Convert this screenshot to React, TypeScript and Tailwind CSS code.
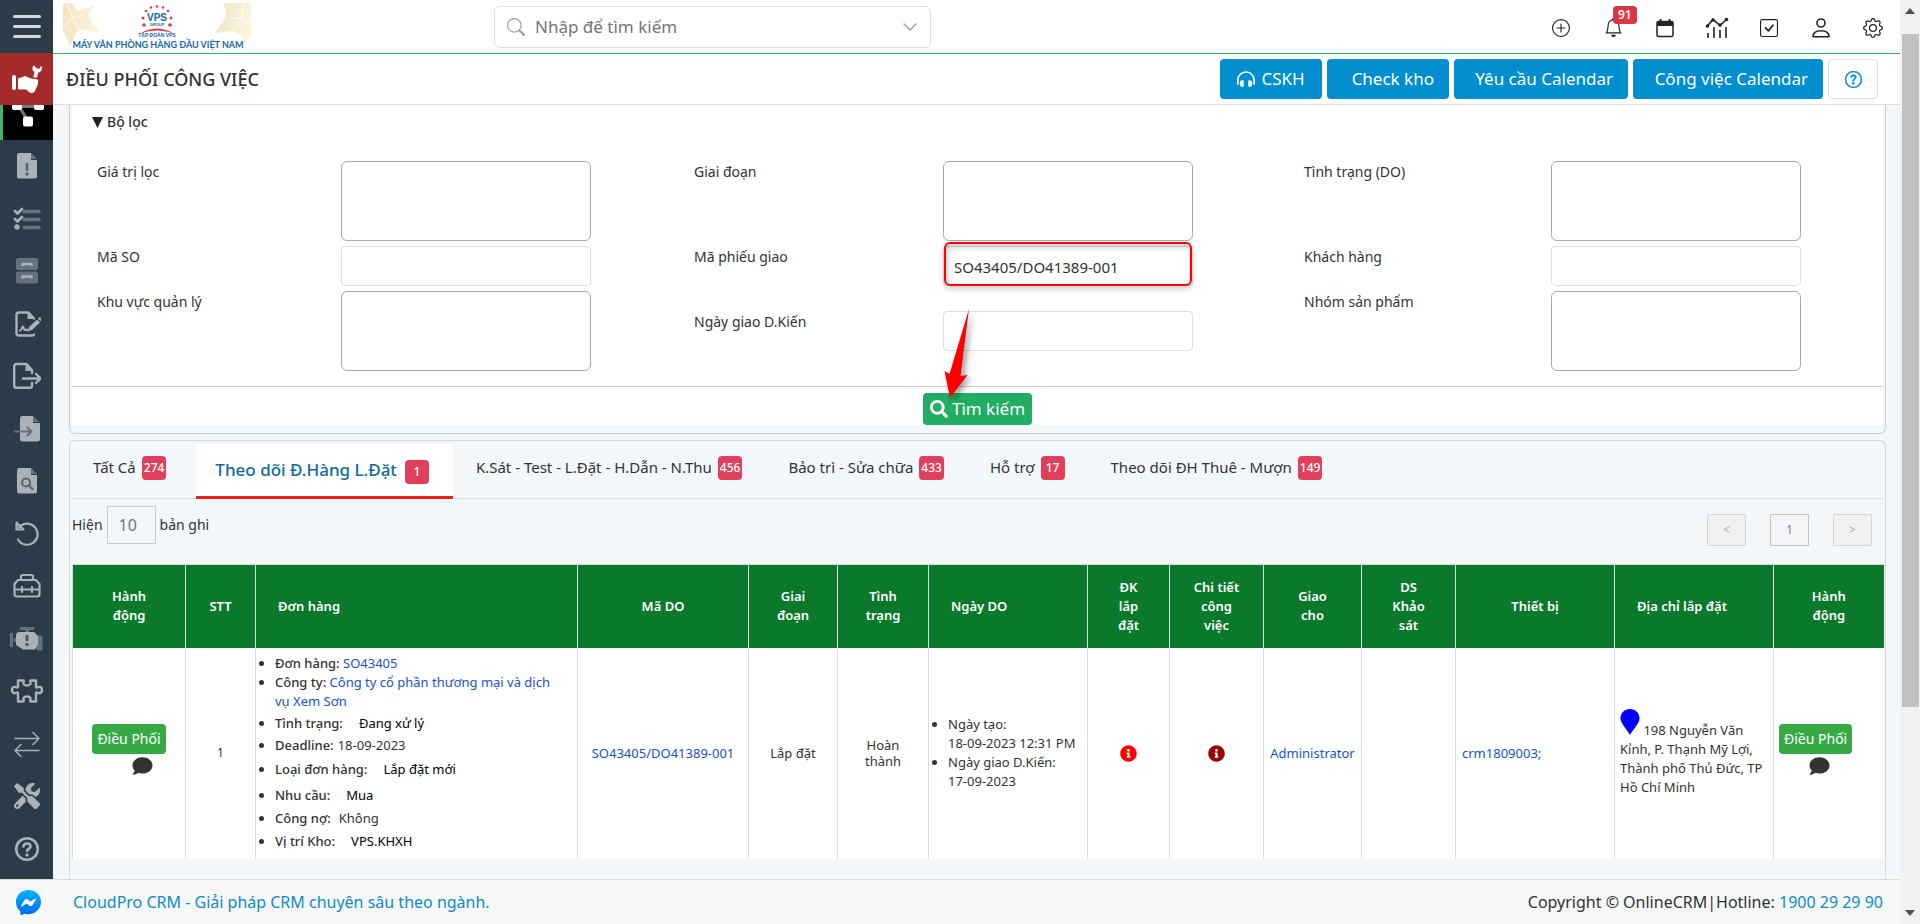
import React from 'react'
import { BsPlusCircle, BsBell, BsCheckSquare, BsGear, BsSearch, BsChevronDown, BsQuestionCircle } from 'react-icons/bs'
import { FaComment, FaInfoCircle, FaSearch, FaHeadphonesAlt, FaTools } from 'react-icons/fa'

const MAIN = '#abb1b8'
const DIM = '#65717d'

type IconProps = { children: React.ReactNode }

const SideSvg = ({ children }: IconProps) => (
  <svg viewBox="0 0 28 28" className="h-7 w-7" fill="none" strokeLinecap="round" strokeLinejoin="round">
    {children}
  </svg>
)

const sideItems: { name: string; icon: React.ReactNode }[] = [
  {
    name: 'Cảnh báo',
    icon: (
      <SideSvg>
        <path d="M6 1h12v7h6v16a2.500 2.500 0 0 1-2.500 2.500h-15A2.500 2.500 0 0 1 4 24V3.500A2.500 2.500 0 0 1 6 1z" fill={MAIN} />
        <path d="M18 1l6 6h-6z" fill={DIM} />
        <path d="M14 12v6" stroke="#5a6673" strokeWidth="2.600" />
        <circle cx="14" cy="22" r="1.700" fill="#5a6673" />
      </SideSvg>
    ),
  },
  {
    name: 'Danh sách',
    icon: (
      <SideSvg>
        <path d="M2 6l2.500 2.500L9 4M2 14l2.500 2.500L9 12" stroke={MAIN} strokeWidth="2.600" />
        <circle cx="4" cy="22" r="2.700" fill={MAIN} />
        <path d="M11 6.500h15M11 14.500h15M11 22.500h15" stroke={DIM} strokeWidth="3.400" />
      </SideSvg>
    ),
  },
  {
    name: 'Lưu trữ',
    icon: (
      <SideSvg>
        <rect x="3" y="1" width="22" height="12" rx="2" fill={DIM} />
        <rect x="3" y="14.500" width="22" height="12" rx="2" fill={DIM} />
        <path d="M9.500 9V7h9v2M9.500 21.500v-2h9v2" stroke={MAIN} strokeWidth="2.400" strokeLinecap="butt" />
      </SideSvg>
    ),
  },
  {
    name: 'Hợp đồng',
    icon: (
      <SideSvg>
        <path d="M21 24.500c-.3.700-1 1-1.500 1H6A2.500 2.500 0 0 1 3.500 23V5A2.500 2.500 0 0 1 6 2.500h9.500l5.500 6" stroke={MAIN} strokeWidth="2.400" />
        <path d="M14.500 2v7H22z" fill={MAIN} />
        <path d="M7 20.500c2-.5 2-4 3-4s.5 4 2 3.500 1.500-1 3 .5" stroke={MAIN} strokeWidth="2" />
        <path d="M15 21l1-4 8-7.500 3 3-8 7.500z" fill={MAIN} />
        <path d="M25 8.500l1-1c1-.7 3.500 1.500 2 3l-.8.800z" fill={MAIN} />
      </SideSvg>
    ),
  },
  {
    name: 'Xuất dữ liệu',
    icon: (
      <SideSvg>
        <path d="M19 11V8l-5.500-6H3.500C2 2 1.200 3 1.200 4v19.500c0 1.500 1 2.300 2.300 2.300h13c1.500 0 2.500-1 2.500-2.300V21" stroke={MAIN} strokeWidth="2.400" />
        <path d="M12.500 2v7H20z" fill={MAIN} />
        <path d="M10 16.500h17M23 12l4.500 4.500L23 21" stroke={MAIN} strokeWidth="2.400" />
      </SideSvg>
    ),
  },
  {
    name: 'Nhập dữ liệu',
    icon: (
      <SideSvg>
        <path d="M9 1h11v7h7v16a2.500 2.500 0 0 1-2.500 2.500H9.500A2.500 2.500 0 0 1 7 24V3.500A2.500 2.500 0 0 1 9 1z" fill={MAIN} />
        <path d="M20 1l7 6h-7z" fill={DIM} />
        <path d="M2 16.500h16M14.500 12.500l4 4-4 4" stroke={DIM} strokeWidth="2.200" />
      </SideSvg>
    ),
  },
  {
    name: 'Tra cứu',
    icon: (
      <SideSvg>
        <path d="M6 1h12v7h6v16a2.500 2.500 0 0 1-2.500 2.500h-15A2.500 2.500 0 0 1 4 24V3.500A2.500 2.500 0 0 1 6 1z" fill={MAIN} />
        <path d="M18 1l6 6h-6z" fill={DIM} />
        <circle cx="13" cy="15.500" r="4" stroke="#5a6673" strokeWidth="2.200" />
        <path d="M16 18.500l3.500 3.500" stroke="#5a6673" strokeWidth="2.400" />
      </SideSvg>
    ),
  },
  {
    name: 'Hoàn tác',
    icon: (
      <SideSvg>
        <path d="M6 7.500A10.500 10.500 0 1 1 5 19.500" stroke={MAIN} strokeWidth="2.200" />
        <path d="M3.500 2.500v7h7z" stroke={MAIN} strokeWidth="2.200" />
      </SideSvg>
    ),
  },
  {
    name: 'Công cụ',
    icon: (
      <SideSvg>
        <path d="M8 8V4.500C8 3.500 8.500 3 9.500 3h9c1 0 1.500.5 1.500 1.500V8" stroke={MAIN} strokeWidth="2.200" />
        <path d="M5 8h18l3.500 4v10c0 1.500-.8 2.500-2.500 2.500H4c-1.700 0-2.500-1-2.500-2.500V12zM2 17.500h24M9 15v5M19 15v5" stroke={MAIN} strokeWidth="2.200" />
      </SideSvg>
    ),
  },
  {
    name: 'Sự cố',
    icon: (
      <svg viewBox="0 0 34 28" className="h-7 w-[34px]" fill="none">
        <path d="M11 3.500h12" stroke={DIM} strokeWidth="3" strokeLinecap="round" />
        <path d="M17 4v4M4 15h4" stroke={DIM} strokeWidth="4" />
        <path d="M1.500 8v14M28 12h3v12h-3z" stroke={DIM} strokeWidth="3" strokeLinejoin="round" />
        <path d="M9 7h15l4 4v9l-3 4.500H13L6 20v-9c0-3 1-4 3-4z" fill={MAIN} />
        <path d="M17 10v6" stroke="#44515f" strokeWidth="2.800" />
        <circle cx="17" cy="19.500" r="1.700" fill="#44515f" />
      </svg>
    ),
  },
  {
    name: 'Tiện ích',
    icon: (
      <svg viewBox="0 0 34 28" className="h-7 w-[34px]" fill="none" stroke={MAIN} strokeWidth="2.400" strokeLinejoin="round">
        <path d="M8 3.500h5.500c1 1.200-.6 2 .1 3.500 1 2 5.800 2 6.800 0 .7-1.500-.9-2.300.1-3.500H26v6.800c1.500.8 2.400-.8 4-.4 2.700.8 2.700 5.400 0 6.200-1.600.4-2.500-1.200-4-.4v8.800h-5.500c-1-1.200.6-2-.1-3.500-1-2-5.800-2-6.800 0-.7 1.500.9 2.300-.1 3.500H8v-8.800c-1.500-.8-2.400.8-4 .4-2.700-.8-2.700-5.400 0-6.200 1.600-.4 2.500 1.200 4 .4z" />
      </svg>
    ),
  },
  {
    name: 'Chuyển đổi',
    icon: (
      <SideSvg>
        <path d="M2 8.500h24M20 2.500l6 6-6 6M26 20.500H2M8 14.500l-6 6 6 6" stroke={MAIN} strokeWidth="1.500" />
      </SideSvg>
    ),
  },
  { name: 'Cài đặt', icon: <FaTools className="h-[26px] w-[26px] text-[#abb1b8]" /> },
  {
    name: 'Trợ giúp',
    icon: (
      <SideSvg>
        <circle cx="14" cy="14" r="10.800" stroke={MAIN} strokeWidth="2.600" />
        <path d="M10.500 11.500c0-4 7-4 7 0 0 2.300-3.500 2.300-3.500 4.500" stroke={MAIN} strokeWidth="2.600" />
        <circle cx="14" cy="20" r="1.700" fill={MAIN} />
      </SideSvg>
    ),
  },
]

const Logo = () => (
  <svg viewBox="0 0 188 48" className="h-12 w-[188px] shrink-0" role="img" aria-label="VPS">
    <defs>
      <linearGradient id="gold" x1="0" x2="1">
        <stop offset="0" stopColor="#f1e6c4" />
        <stop offset="1" stopColor="#fbf5df" />
      </linearGradient>
    </defs>
    <g fill="url(#gold)">
      <path d="M0 0h9l5 8 18-6-7 11 12 17-19-4-5 4-6 13-7-16z" />
      <path d="M188 0h-27l2 13-3 5-8 12 19-2 8 5 3 8 6-10z" />
    </g>
    <path d="M0 24l10-9L4 0M10 15l11-3M10 15l7 13M188 22l-10-7 4-15M178 15h-10M178 15l-6 12" stroke="#fffdf2" fill="none" />
    <g fill="#dc3e4c">
      <circle cx="94" cy="3.500" r="1.300" />
      <circle cx="88" cy="4.500" r="1.300" />
      <circle cx="100" cy="4.500" r="1.300" />
      <circle cx="83" cy="8" r="1.300" />
      <circle cx="105" cy="8" r="1.300" />
      <circle cx="80" cy="15" r="1.500" />
      <circle cx="108" cy="15" r="1.500" />
      <circle cx="81" cy="22" r="1.800" />
      <circle cx="107" cy="22" r="1.800" />
      <path d="M78 30q16-9 32 0q-16-5-32 0z" />
    </g>
    <g textAnchor="middle" fill="#1766a8" fontFamily="Liberation Sans, sans-serif" fontWeight="700">
      <text x="94" y="18" fontSize="10">VPS</text>
      <text x="94" y="23" fontSize="4">GROUP</text>
      <text x="94" y="34" fontSize="5">TẬP ĐOÀN VPS</text>
      <text x="95" y="45" fontSize="9" fontFamily="Lato, sans-serif">MÁY VĂN PHÒNG HÀNG ĐẦU VIỆT NAM</text>
    </g>
  </svg>
)

const CalendarIcon = () => (
  <svg viewBox="0 0 20 20" className="h-5 w-5" fill="none" stroke="#222">
    <rect x="2" y="3.500" width="16" height="15" rx="1.500" strokeWidth="1.500" />
    <path d="M2 3h16v5H2z" fill="#222" stroke="none" />
    <path d="M5.500 1v3M14.500 1v3" strokeWidth="1.800" />
  </svg>
)

const ChartIcon = () => (
  <svg viewBox="0 0 24 22" className="h-[22px] w-6" fill="none" stroke="#222" strokeWidth="1.600">
    <path d="M2 9.500l6-7 7 6 7-6.500" />
    <path d="M3 16v5M9 10v11M15 13v8M21 10v11" />
    <g fill="#222" stroke="none">
      <circle cx="2.500" cy="9" r="1.800" />
      <circle cx="8" cy="3" r="1.800" />
      <circle cx="15" cy="8" r="1.800" />
      <circle cx="21.500" cy="2.500" r="1.800" />
    </g>
  </svg>
)

const iconBtn = 'flex h-7 w-7 items-center justify-center'

const Header = () => (
  <header className="flex h-[54px] shrink-0 items-center border-b border-[#3cb371] bg-white pr-[13px] pl-2.5">
    <div className="flex w-[431px] shrink-0">
      <Logo />
    </div>
    <div className="flex h-[42px] w-[437px] items-center rounded-md border border-[#dedede] px-3">
      <BsSearch className="h-[18px] w-[18px] text-[#a0a0a0]" />
      <input aria-label="Tìm kiếm nhanh" placeholder="Nhập để tìm kiếm" className="ml-2.5 flex-1 text-[17px] outline-none placeholder:text-[#757575]" />
      <BsChevronDown className="h-4 w-4 stroke-[0.5] text-[#999]" />
    </div>
    <nav className="flex flex-1 items-center justify-end gap-6 pt-0.5 text-[#222]">
      <button className={iconBtn} aria-label="Thêm mới"><BsPlusCircle className="h-[18px] w-[18px]" /></button>
      <button className={`${iconBtn} relative`} aria-label="Thông báo">
        <BsBell className="h-[19px] w-[19px]" />
        <span className="absolute -top-2 left-3.5 rounded-sm bg-[#dc3545] px-[5px] text-xs leading-[18px] font-semibold text-white">91</span>
      </button>
      <button className={iconBtn} aria-label="Lịch"><CalendarIcon /></button>
      <button className={iconBtn} aria-label="Báo cáo"><ChartIcon /></button>
      <button className={iconBtn} aria-label="Nhiệm vụ"><BsCheckSquare className="h-[18px] w-[18px]" /></button>
      <button className={iconBtn} aria-label="Tài khoản">
        <svg viewBox="0 0 20 20" className="h-5 w-5" fill="none" stroke="#222" strokeWidth="1.600">
          <circle cx="10" cy="5" r="4" />
          <path d="M2 18.800c0-4 3-6 8-6s8 2 8 6z" strokeLinejoin="round" />
        </svg>
      </button>
      <button className={iconBtn} aria-label="Cài đặt"><BsGear className="h-5 w-5" /></button>
    </nav>
  </header>
)

const blueBtn = 'flex h-10 items-center rounded bg-[#008ecf] text-[17px] text-white'

const TitleBar = () => (
  <div className="flex h-[51px] shrink-0 items-center justify-between border-b border-[#dedede] bg-white pr-[22px] pl-[13px]">
    <h1 className="text-lg font-medium text-[#333]">ĐIỀU PHỐI CÔNG VIỆC</h1>
    <div className="flex gap-[5px]">
      <button className={`${blueBtn} w-[102px] justify-center gap-1.5`}>
        <FaHeadphonesAlt className="h-[18px] w-[18px]" />
        CSKH
      </button>
      <button className={`${blueBtn} w-[122px] justify-end pr-[15px]`}>Check kho</button>
      <button className={`${blueBtn} w-[174px] justify-end pr-[15px]`}>Yêu cầu Calendar</button>
      <button className={`${blueBtn} w-[190px] justify-end pr-[15px]`}>Công việc Calendar</button>
      <button className="flex h-10 w-[50px] items-center justify-center rounded border border-[#dedede] text-[#008ecf]" aria-label="Trợ giúp">
        <BsQuestionCircle className="h-[17px] w-[17px] stroke-[0.5]" />
      </button>
    </div>
  </div>
)

const Sidebar = () => (
  <aside className="flex w-[53px] shrink-0 flex-col bg-[#2c3b49]">
    <button className="flex h-[53px] shrink-0 flex-col items-center justify-center gap-[7px]" aria-label="Menu">
      <span className="h-[3px] w-7 rounded-full bg-[#d5d8db]" />
      <span className="h-[3px] w-7 rounded-full bg-[#d5d8db]" />
      <span className="h-[3px] w-7 rounded-full bg-[#d5d8db]" />
    </button>
    <a href="#dieu-phoi" className="flex h-[52px] shrink-0 items-center justify-center bg-[#a52a2a]" aria-label="Điều phối">
      <svg viewBox="0 0 32 32" className="h-8 w-8" fill="#fff" stroke="#fff" strokeLinejoin="round">
        <rect x="1.500" y="12.500" width="3" height="14" rx="1" />
        <path d="M7.500 15.500c3 0 4.500-1.500 6.500-2l6 2.500 6.500 1v4l-3.500 8-4 .5-3.500-3.500H7.500z" />
        <path d="M23 2.500c-2.200 2-1.800 5 .7 6.500L22.500 14l3.200.8 1.400-5.200c3-.5 4.500-3.500 3.200-6.600l-2 3-3-.8z" strokeWidth=".3" />
      </svg>
    </a>
    <a href="#quy-trinh" className="flex h-[35px] shrink-0 items-start justify-center border-l-[3px] border-[#3cb371] bg-black" aria-label="Quy trình">
      <svg viewBox="0 0 32 22" className="h-[22px] w-8">
        <path d="M7 1.500h18M8 3l8 13" stroke="#777" strokeWidth="3" />
        <path d="M0 0h10v3a2 2 0 0 1-2 2H2a2 2 0 0 1-2-2zM22 0h10v3a2 2 0 0 1-2 2h-6a2 2 0 0 1-2-2z" fill="#fff" />
        <rect x="11" y="11.500" width="10" height="10" rx="2" fill="#fff" />
      </svg>
    </a>
    <nav className="flex flex-1 flex-col pb-1">
      {sideItems.map((item) => (
        <a key={item.name} href="#menu" aria-label={item.name} className="flex flex-1 items-center justify-center">
          {item.icon}
        </a>
      ))}
    </nav>
  </aside>
)

type FieldProps = {
  id: string
  label: string
  labelClass: string
  area?: boolean
  value?: string
  className?: string
}

const Field = ({ id, label, labelClass, area, value, className = '' }: FieldProps) => (
  <div className={`flex items-start ${className}`}>
    <label htmlFor={id} className={`${labelClass} shrink-0 text-sm leading-[22px]`}>{label}</label>
    {area ? (
      <textarea id={id} className="block h-20 w-[250px] resize-none rounded-md border border-[#aaa] bg-white px-2 text-sm" />
    ) : (
      <div className="relative">
        <input id={id} defaultValue={value} className="block h-10 w-[250px] rounded border border-[#dedede] bg-white px-2.5 pt-0.5 text-[15px] text-[#333]" />
        {value && (
          <span className="pointer-events-none absolute inset-x-px -top-1 bottom-0 rounded-md border-2 border-[#f00] shadow-[0_3px_6px_rgba(0,0,0,0.2),inset_2px_3px_6px_rgba(0,0,0,0.2)]" />
        )}
      </div>
    )}
  </div>
)

const FilterPanel = () => (
  <section className="rounded-b-md border border-t-0 border-[#ccd0d3] px-0.5 pb-2">
    <div className="bg-white">
      <details open>
        <summary className="flex cursor-pointer list-none items-center gap-1 pt-1.5 pl-5 text-sm leading-[22px] font-medium">
          <svg viewBox="0 0 11 11" className="h-[11px] w-[11px]"><path d="M0 0h11L5.500 11z" fill="#222" /></svg>
          Bộ lọc
        </summary>
        <div className="mt-7 grid grid-cols-[597fr_610fr_579fr] pb-[15px] pl-[25px]">
          <div className="flex flex-col gap-[5px]">
            <Field id="gia-tri-loc" label="Giá trị lọc" labelClass="w-[244px]" area />
            <Field id="ma-so" label="Mã SO" labelClass="w-[244px]" />
            <Field id="khu-vuc" label="Khu vực quản lý" labelClass="w-[244px]" area />
          </div>
          <div className="flex flex-col gap-[5px]">
            <Field id="giai-doan" label="Giai đoạn" labelClass="w-[249px]" area />
            <Field id="ma-phieu-giao" label="Mã phiếu giao" labelClass="w-[249px]" value="SO43405/DO41389-001" />
            <Field id="ngay-giao" label="Ngày giao D.Kiến" labelClass="w-[249px]" className="mt-5" />
          </div>
          <div className="flex flex-col gap-[5px]">
            <Field id="tinh-trang" label="Tình trạng (DO)" labelClass="w-[247px]" area />
            <Field id="khach-hang" label="Khách hàng" labelClass="w-[247px]" />
            <Field id="nhom-san-pham" label="Nhóm sản phẩm" labelClass="w-[247px]" area />
          </div>
        </div>
      </details>
      <div className="flex justify-center border-t border-[#ccc] pt-1.5">
        <div className="relative">
          <button className="flex h-8 items-center gap-1 rounded bg-[#22ad64] px-[7px] text-[17px] text-white">
            <FaSearch className="h-[18px] w-[18px]" />
            Tìm kiếm
          </button>
          <svg viewBox="0 0 36 100" className="pointer-events-none absolute -top-[88px] left-4 h-[100px] w-9 drop-shadow-[3px_3px_3px_rgba(0,0,0,0.4)]">
            <path d="M30 4L21.500 71l7-1L11 93 5.500 66l5 3z" fill="#f00" />
          </svg>
        </div>
      </div>
    </div>
  </section>
)

const tabs = [
  { name: 'K.Sát - Test - L.Đặt - H.Dẫn - N.Thu', count: 456 },
  { name: 'Bảo trì - Sửa chữa', count: 433 },
  { name: 'Hỗ trợ', count: 17 },
  { name: 'Theo dõi ĐH Thuê - Mượn', count: 149 },
]

const Badge = ({ children }: { children: React.ReactNode }) => (
  <span className="flex h-6 min-w-6 items-center justify-center rounded bg-[#e0405b] px-0.5 text-xs font-medium text-white">{children}</span>
)

const Tabs = () => (
  <div className="flex h-[55px] border-b border-[#dcdfe2]">
    <button className="flex items-start gap-1.5 pt-3 pr-[30px] pl-[21px] text-[15px] leading-[22px]">Tất Cả <Badge>274</Badge></button>
    <button className="flex h-[55px] items-start gap-2 border-b-[3px] border-[#f5201e] bg-white pt-4 pr-6 pl-[19px] text-[17px] leading-5 font-medium text-[#106a9c]">
      Theo dõi Đ.Hàng L.Đặt <Badge>1</Badge>
    </button>
    {tabs.map((tab) => (
      <button key={tab.name} className="flex items-start gap-1.5 px-[23px] pt-3 text-[15px] leading-[22px]">
        {tab.name} <Badge>{tab.count}</Badge>
      </button>
    ))}
  </div>
)

const columns: { name: string; width: string; align?: string }[] = [
  { name: 'Hành động', width: 'w-[113px]', align: 'px-8' },
  { name: 'STT', width: 'w-[70px]' },
  { name: 'Đơn hàng', width: 'w-[322px]', align: 'text-left pl-[22px]' },
  { name: 'Mã DO', width: 'w-[171px]' },
  { name: 'Giai đoạn', width: 'w-[89px]', align: 'px-6' },
  { name: 'Tình trạng', width: 'w-[91px]', align: 'px-6' },
  { name: 'Ngày DO', width: 'w-[159px]', align: 'text-left pl-[22px]' },
  { name: 'ĐK lắp đặt', width: 'w-[82px]', align: 'px-6' },
  { name: 'Chi tiết công việc', width: 'w-[94px]', align: 'px-5' },
  { name: 'Giao cho', width: 'w-[98px]', align: 'px-7' },
  { name: 'DS Khảo sát', width: 'w-[94px]', align: 'px-6' },
  { name: 'Thiết bị', width: 'w-[159px]' },
  { name: 'Địa chỉ lắp đặt', width: 'w-[159px]', align: 'text-left pl-[22px]' },
  { name: 'Hành động', width: 'w-[110px]', align: 'px-8' },
]

const details = [
  { label: 'Tình trạng:', value: 'Đang xử lý', line: 'leading-6', tone: 'ml-4 text-black' },
  { label: 'Deadline:', value: '18-09-2023', line: 'leading-5', tone: 'ml-1' },
  { label: 'Loại đơn hàng:', value: 'Lắp đặt mới', line: 'leading-7', tone: 'ml-4 text-black' },
  { label: 'Nhu cầu:', value: 'Mua', line: 'leading-6', tone: 'ml-4 text-black' },
  { label: 'Công nợ:', value: 'Không', line: 'leading-[22px]', tone: 'ml-2' },
  { label: 'Vị trí Kho:', value: 'VPS.KHXH', line: 'leading-6', tone: 'ml-4 text-black' },
]

const DispatchButton = () => (
  <button className="h-[30px] rounded bg-[#37aa45] px-[5px] text-sm text-white">Điều Phối</button>
)

const link = 'text-[#1a53c4]'
const cell = 'border-l border-[#dcdcdc]'

const OrderTable = () => (
  <table className="w-full table-fixed border-collapse border-t border-[#dcdcdc] bg-white text-[13px] leading-[19px]">
    <thead>
      <tr className="h-[83px] bg-[#0a792b] text-white">
        {columns.map((col, i) => (
          <th key={i} className={`${col.width} ${col.align ?? ''} border-l border-[#dcdcdc] font-semibold`}>{col.name}</th>
        ))}
      </tr>
    </thead>
    <tbody>
      <tr className="h-[211px]">
        <td className={`${cell} pb-1.5 text-center`}>
          <DispatchButton />
          <FaComment className="mt-0.5 ml-[59px] h-5 w-[21px] text-[#333]" />
        </td>
        <td className={`${cell} text-center text-xs`}>1</td>
        <td className={`${cell} pr-4 pl-[19px]`}>
          <ul className="list-disc">
            <li><b className="font-medium">Đơn hàng:</b> <a href="#so" className={link}>SO43405</a></li>
            <li>
              <b className="font-medium">Công ty:</b> <a href="#account" className={link}>Công ty cổ phần thương mại và dịch vụ Xem Sơn</a>
            </li>
            {details.map((d) => (
              <li key={d.label} className={d.line}>
                <b className="font-medium">{d.label}</b>
                <span className={d.tone}>{d.value}</span>
              </li>
            ))}
          </ul>
        </td>
        <td className={`${cell} text-center`}><a href="#do" className={link}>SO43405/DO41389-001</a></td>
        <td className={`${cell} text-center`}>Lắp đặt</td>
        <td className={`${cell} px-6 text-center leading-4`}>Hoàn thành</td>
        <td className={`${cell} pl-[19px]`}>
          <ul className="list-disc">
            <li>Ngày tạo:<br /><span className="whitespace-nowrap">18-09-2023 12:31 PM</span></li>
            <li>Ngày giao D.Kiến:<br />17-09-2023</li>
          </ul>
        </td>
        <td className={cell}><FaInfoCircle className="mx-auto h-[17px] w-[17px] text-[#f00]" /></td>
        <td className={cell}><FaInfoCircle className="mx-auto h-[17px] w-[17px] text-[#900]" /></td>
        <td className={`${cell} text-center`}><a href="#user" className={link}>Administrator</a></td>
        <td className={cell} />
        <td className={`${cell} pl-1.5`}><a href="#device" className={link}>crm1809003;</a></td>
        <td className={`${cell} px-[5px]`}>
          <svg viewBox="0 0 20 26" className="inline-block h-[26px] w-5 align-baseline">
            <path d="M10 0c5.500 0 9.500 4 9.500 9.500 0 5-7 11.500-9.500 16.500C7.500 21 .5 14.500.5 9.500.5 4 4.500 0 10 0z" fill="#00f" />
          </svg>{' '}
          198 Nguyễn Văn Kỉnh, P. Thạnh Mỹ Lợi, Thành phố Thủ Đức, TP Hồ Chí Minh
        </td>
        <td className={`${cell} pb-1.5 pl-[5px]`}>
          <DispatchButton />
          <FaComment className="mt-0.5 ml-[30px] h-5 w-[21px] text-[#333]" />
        </td>
      </tr>
    </tbody>
  </table>
)

const ResultPanel = () => (
  <section className="mt-1.5 flex-1 rounded-t-md border border-b-0 border-[#d5d9dc] px-0.5 pt-[3px]">
    <Tabs />
    <div className="flex h-[65px] items-start justify-between">
      <div className="flex items-center pt-[7px] text-sm">
        <label htmlFor="page-size" className="mr-1">Hiện</label>
        <select id="page-size" defaultValue="10" className="h-[38px] w-[49px] appearance-none border border-[#ccc] pl-[11px] text-base text-[#757575]">
          <option>10</option>
        </select>
        <span className="ml-1">bản ghi</span>
      </div>
      <div className="flex gap-6 pt-[15px] pr-[11px] text-xs">
        <button className="h-8 w-[39px] rounded-xs border border-[#d5d5d5] bg-[#f1f1f1] text-[#aaa]">&lt;</button>
        <button className="h-8 w-[39px] border border-[#c5c5c5] bg-[#f5f5f5] text-[#6f7cff]">1</button>
        <button className="h-8 w-[39px] rounded-xs border border-[#d5d5d5] bg-[#f1f1f1] text-[#aaa]">&gt;</button>
      </div>
    </div>
    <OrderTable />
  </section>
)

const Footer = () => (
  <footer className="flex h-[45px] shrink-0 items-center justify-between border-t border-[#d9dcdc] bg-[#f6f8f7] pr-[17px] pl-4 text-base text-[#333]">
    <div className="flex items-center gap-8">
      <svg viewBox="0 0 24 24" className="h-[25px] w-[25px]">
        <defs>
          <linearGradient id="msg" x1="0" x2="0" y1="0" y2="1">
            <stop offset="0" stopColor="#00b2ff" />
            <stop offset="1" stopColor="#006aff" />
          </linearGradient>
        </defs>
        <path d="M12 0C5.200 0 0 5 0 11.600c0 3.500 1.400 6.500 3.800 8.600.5.400.2 3.800 1.300 3.800.8 0 2.300-1.200 3.300-1.300 1.100.3 2.300.5 3.600.5 6.800 0 12-5 12-11.600S18.800 0 12 0z" fill="url(#msg)" />
        <path d="M4.800 15l3.500-5.600c.6-.9 1.800-1.100 2.700-.5l2.800 2.100 4.500-2.700c.5-.3 1.200.2.800.8L15.700 14.600c-.6.900-1.800 1.100-2.700.5l-2.800-2.100-4.600 2.800c-.5.300-1.100-.3-.8-.8z" fill="#fff" />
      </svg>
      <a href="#cloudpro" className="text-[#108ac8]">CloudPro CRM - Giải pháp CRM chuyên sâu theo ngành.</a>
    </div>
    <p>Copyright © OnlineCRM|Hotline: <a href="tel:1900292990" className="text-[#108ac8]">1900 29 29 90</a></p>
  </footer>
)

const App: React.FC = () => {
  return (
    <div className="flex h-screen overflow-hidden bg-[#f4f7fa] font-['Noto_Sans','Open_Sans',sans-serif] text-[#333]">
      <div className="flex min-w-0 flex-1 flex-col">
        <div className="flex min-h-0 flex-1">
          <Sidebar />
          <div className="flex min-w-0 flex-1 flex-col">
            <Header />
            <TitleBar />
            <main className="flex min-h-0 flex-1 flex-col overflow-hidden pr-3.5 pl-4">
              <FilterPanel />
              <ResultPanel />
            </main>
          </div>
        </div>
        <Footer />
      </div>
      {/* Scrollbar */}
      <div className="flex w-5 flex-col items-center bg-[#f1f1f1]">
        <svg viewBox="0 0 10 6" className="mt-2 h-1.5 w-2.5 shrink-0"><path d="M0 6l5-6 5 6z" fill="#505050" /></svg>
        <div className="mt-5 h-[673px] w-[17px] shrink-0 bg-[#c1c1c1]" />
        <svg viewBox="0 0 10 6" className="mt-auto mb-2 h-1.5 w-2.5 shrink-0"><path d="M0 0l5 6 5-6z" fill="#505050" /></svg>
      </div>
    </div>
  )
}

export default App
